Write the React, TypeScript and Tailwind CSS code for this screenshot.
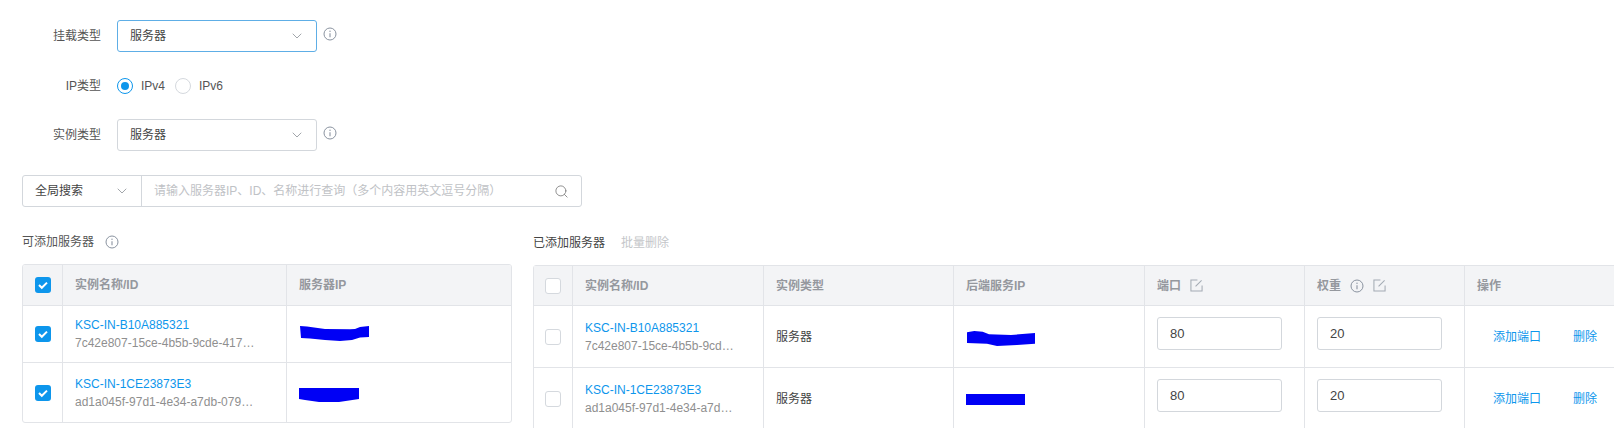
import { ChevronDown, Search } from "lucide-react";

const font = "font-['Liberation_Sans','Noto_Sans_CJK_SC',sans-serif]";

function InfoIcon({ className = "" }: { className?: string }) {
    return (
        <svg viewBox="0 0 14 14" fill="none" className={`h-[14px] w-[14px] shrink-0 text-[#8a93a0] ${className}`}>
            <circle cx="7" cy="7" r="6" stroke="currentColor" />
            <path d="M7 6.2v4" stroke="currentColor" strokeWidth="1.1" />
            <circle cx="7" cy="4.3" r="0.7" fill="currentColor" />
        </svg>
    );
}

function EditIcon() {
    return (
        <svg viewBox="0 0 14 14" fill="none" className="h-[13px] w-[13px] shrink-0 text-[#a3aab3]">
            <path d="M8 1H1v12h12V7" stroke="currentColor" strokeWidth="1.1" />
            <path d="M6 8l6.5-6.5" stroke="currentColor" strokeWidth="1.1" />
        </svg>
    );
}

function Checkbox({ checked = false }: { checked?: boolean }) {
    if (checked) {
        return (
            <span className="flex h-4 w-4 items-center justify-center rounded-[3px] bg-[#0d96ec]">
                <svg viewBox="0 0 16 16" fill="none" className="h-4 w-4">
                    <path d="M4 8l2.8 2.8L12 5.6" stroke="white" strokeWidth="2" />
                </svg>
            </span>
        );
    }
    return <span className="block h-4 w-4 rounded-[3px] border border-[#d5d9de] bg-white" />;
}

function Select({ focused = false }: { focused?: boolean }) {
    return (
        <div className={`flex h-8 w-[200px] items-center justify-between rounded-[3px] border pl-3 pr-[11px] text-xs text-[#444] ${focused ? "border-[#5eaee6]" : "border-[#d3d7dc]"}`}>
            <span>服务器</span>
            <ChevronDown className="h-4 w-4 text-[#8a8f96]" strokeWidth={1.2} />
        </div>
    );
}

function FormRow({ label, children, className = "" }: { label: string; children: React.ReactNode; className?: string }) {
    return (
        <div className={`flex h-8 items-center ${className}`}>
            <span className="w-[101px] text-right text-xs text-[#555]">{label}</span>
            <div className="ml-4 flex items-center">{children}</div>
        </div>
    );
}

function Scribble({ d, w }: { d: string; w: number }) {
    return (
        <svg width={w} height="20" viewBox={`0 0 ${w} 20`} className="block">
            <path d={d} fill="#0000f5" />
        </svg>
    );
}

function NameCell({ name, id }: { name: string; id: string }) {
    return (
        <div className="leading-[18px]">
            <div className="text-[#0d96ec]">{name}</div>
            <div className="whitespace-nowrap text-[#8f8f8f]">{id}</div>
        </div>
    );
}

const leftRows = [
    {
        name: "KSC-IN-B10A885321",
        id: "7c42e807-15ce-4b5b-9cde-417…",
        scribble: "M1 2 L8 2.5 L26 5 L51 5.3 L56 5 L61 3 L70 2 L70 13 L61 13.5 L53 16 L41 17 L26 16 L11 14.5 L2 14 Z",
        w: 71,
        height: "h-[57px]",
    },
    {
        name: "KSC-IN-1CE23873E3",
        id: "ad1a045f-97d1-4e34-a7db-079…",
        scribble: "M0 5 L60 5 L60 16 L40 19 L20 19 L6 17 L0 16 Z",
        w: 61,
        height: "h-[60px]",
    },
];

const rightRows = [
    {
        name: "KSC-IN-B10A885321",
        id: "7c42e807-15ce-4b5b-9cd…",
        scribble: "M1 5.3 L8.3 4 L16.7 4.7 L23 7.3 L45 8 L69 6 L69 16.7 L51 18 L31 19 L21 16.7 L1 16 Z",
        w: 70,
        height: "h-[62px]",
    },
    {
        name: "KSC-IN-1CE23873E3",
        id: "ad1a045f-97d1-4e34-a7d…",
        scribble: "M0 5 L59 5 L59 16 L0 16 Z",
        w: 60,
        height: "h-[63px]",
    },
];

function NumberInput({ value }: { value: string }) {
    return (
        <div className="flex h-[33px] w-[125px] items-center rounded-[3px] border border-[#d3d7dc] pl-3 text-[13px] text-[#444]">
            {value}
        </div>
    );
}

function LeftTable() {
    return (
        <div className="mt-[14px] overflow-hidden rounded-[3px] border border-[#e2e4e8] text-xs">
            <div className="flex h-[40px] bg-[#f3f4f6] font-bold text-[#95989e]">
                <div className="flex w-[40px] items-center justify-center border-r border-[#e2e4e8]">
                    <Checkbox checked />
                </div>
                <div className="flex w-[224px] items-center border-r border-[#e2e4e8] pl-3">实例名称/ID</div>
                <div className="flex flex-1 items-center pl-[12px]">服务器IP</div>
            </div>
            {leftRows.map((row) => (
                <div key={row.name} className={`flex border-t border-[#e2e4e8] first:border-t-0 ${row.height}`}>
                    <div className="flex w-[40px] items-center justify-center border-r border-[#e2e4e8]">
                        <Checkbox checked />
                    </div>
                    <div className="flex w-[224px] items-center border-r border-[#e2e4e8] pl-3">
                        <NameCell name={row.name} id={row.id} />
                    </div>
                    <div className="flex flex-1 items-center pl-[12px]">
                        <Scribble d={row.scribble} w={row.w} />
                    </div>
                </div>
            ))}
        </div>
    );
}

function RightTable() {
    return (
        <div className="mt-[14px] w-[1100px] rounded-t-[3px] border border-[#e2e4e8] text-xs">
            <div className="flex h-[39px] bg-[#f3f4f6] font-bold text-[#95989e]">
                <div className="flex w-[39px] items-center justify-center border-r border-[#e2e4e8]">
                    <Checkbox />
                </div>
                <div className="flex w-[191px] items-center border-r border-[#e2e4e8] pl-3">实例名称/ID</div>
                <div className="flex w-[190px] items-center border-r border-[#e2e4e8] pl-3">实例类型</div>
                <div className="flex w-[191px] items-center border-r border-[#e2e4e8] pl-3">后端服务IP</div>
                <div className="flex w-[160px] items-center gap-[9px] border-r border-[#e2e4e8] pl-3">
                    端口
                    <EditIcon />
                </div>
                <div className="flex w-[160px] items-center gap-[9px] border-r border-[#e2e4e8] pl-3">
                    权重
                    <InfoIcon className="h-[13px] w-[13px]" />
                    <EditIcon />
                </div>
                <div className="flex flex-1 items-center pl-3">操作</div>
            </div>
            {rightRows.map((row) => (
                <div key={row.name} className={`flex border-t border-[#e2e4e8] first:border-t-0 ${row.height}`}>
                    <div className="flex w-[39px] items-center justify-center border-r border-[#e2e4e8]">
                        <Checkbox />
                    </div>
                    <div className="flex w-[191px] items-center border-r border-[#e2e4e8] pl-3">
                        <NameCell name={row.name} id={row.id} />
                    </div>
                    <div className="flex w-[190px] items-center border-r border-[#e2e4e8] pl-3 text-[#444]">服务器</div>
                    <div className="flex w-[191px] items-center border-r border-[#e2e4e8] pl-3">
                        <Scribble d={row.scribble} w={row.w} />
                    </div>
                    <div className="w-[160px] border-r border-[#e2e4e8] pl-3 pt-[11px]">
                        <NumberInput value="80" />
                    </div>
                    <div className="w-[160px] border-r border-[#e2e4e8] pl-3 pt-[11px]">
                        <NumberInput value="20" />
                    </div>
                    <div className="flex flex-1 items-center pl-7 text-[#0d96ec]">
                        <span>添加端口</span>
                        <span className="ml-8">删除</span>
                    </div>
                </div>
            ))}
        </div>
    );
}

export default function App() {
    return (
        <div className={`h-[428px] w-[1614px] overflow-hidden bg-white ${font}`}>
            <div className="pt-5">
                <FormRow label="挂载类型">
                    <Select focused />
                    <InfoIcon className="mb-[4px] ml-[6px]" />
                </FormRow>
                <FormRow label="IP类型" className="mt-[18px]">
                    <span className="flex h-4 w-4 items-center justify-center rounded-full border border-[#0d96ec]">
                        <span className="h-2 w-2 rounded-full bg-[#0d96ec]" />
                    </span>
                    <span className="ml-2 text-xs text-[#555]">IPv4</span>
                    <span className="ml-[10px] h-4 w-4 rounded-full border border-[#d5d9de]" />
                    <span className="ml-2 text-xs text-[#555]">IPv6</span>
                </FormRow>
                <FormRow label="实例类型" className="mt-[17px]">
                    <Select />
                    <InfoIcon className="mb-[4px] ml-[6px]" />
                </FormRow>
            </div>

            <div className="ml-[22px] mt-6 flex h-8 w-[560px] items-center rounded-[3px] border border-[#d3d7dc] text-xs">
                <div className="flex h-full w-[119px] items-center justify-between border-r border-[#d3d7dc] pl-3 pr-[11px] text-[#444]">
                    <span>全局搜索</span>
                    <ChevronDown className="h-4 w-4 text-[#8a8f96]" strokeWidth={1.2} />
                </div>
                <span className="ml-3 flex-1 text-[#c0c2c6]">请输入服务器IP、ID、名称进行查询（多个内容用英文逗号分隔）</span>
                <Search className="mr-[12px] h-[15px] w-[15px] text-[#777]" strokeWidth={1.3} />
            </div>

            <div className="ml-[22px] mt-[27px] flex gap-[21px]">
                <div className="w-[490px] shrink-0">
                    <div className="flex h-4 items-center gap-[11px] text-xs text-[#555]">
                        可添加服务器
                        <InfoIcon className="h-[12px] w-[12px]" />
                    </div>
                    <LeftTable />
                </div>
                <div className="shrink-0 pt-px">
                    <div className="flex h-4 items-center gap-[16px] text-xs text-[#444]">
                        已添加服务器
                        <span className="text-[#c4c6c9]">批量删除</span>
                    </div>
                    <RightTable />
                </div>
            </div>
        </div>
    );
}
